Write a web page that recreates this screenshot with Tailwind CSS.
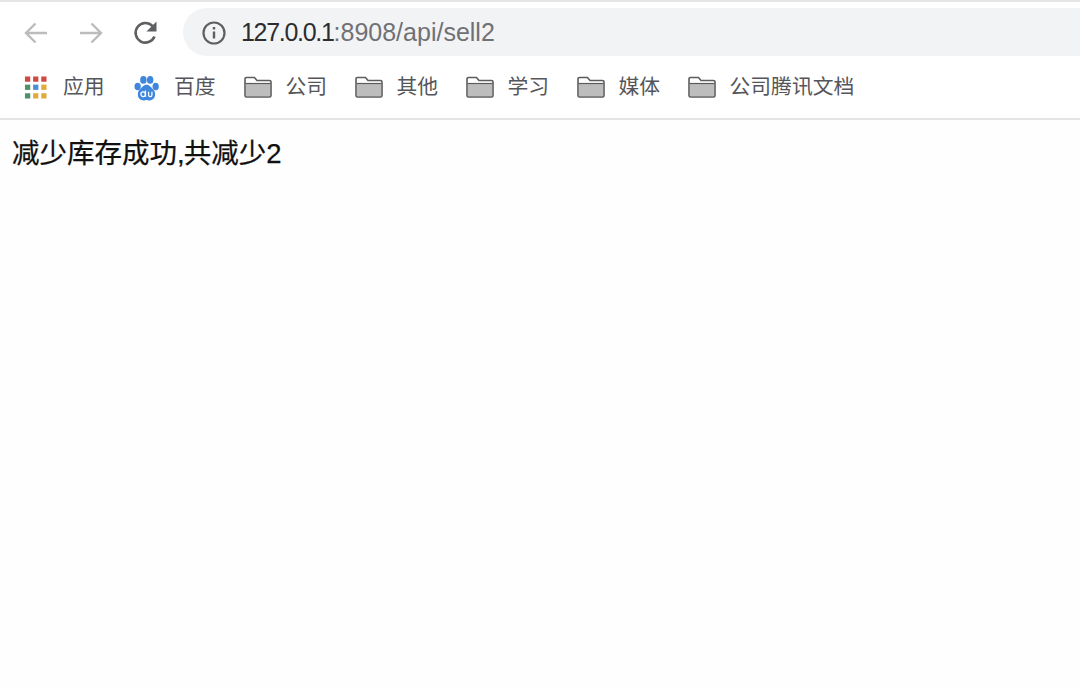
<!DOCTYPE html>
<html lang="zh-CN">
<head>
<meta charset="utf-8">
<script src="https://cdn.jsdelivr.net/npm/@tailwindcss/browser@4"></script>
</head>
<body class="bg-[#fefefe] font-['Liberation_Sans','Noto_Sans_CJK_SC',sans-serif] w-[1080px] h-[687px] overflow-hidden">
<div class="h-[120px] bg-white border-t-[2px] border-b-[2px] border-t-[#e6e6e6] border-b-[#e4e4e4] flex flex-col">
  <div class="h-[60px] pt-[6px] flex items-start">
    <div class="w-[183px] h-[48px] flex items-center pl-[22px] gap-[27px] shrink-0">
      <svg class="w-[28px] h-[28px] mt-[2px]" viewBox="0 0 28 28" fill="none" stroke="#bcbcbc" stroke-width="2.4"><path d="M25 14H4M13.5 4.5L4 14l9.500 9.500"/></svg>
      <svg class="w-[28px] h-[28px] mt-[2px]" viewBox="0 0 28 28" fill="none" stroke="#bcbcbc" stroke-width="2.400"><path d="M3 14h21M14.500 4.500L24 14l-9.500 9.500"/></svg>
      <svg class="w-[28px] h-[28px] mt-[2px]" viewBox="0 0 28 28" fill="none"><path d="M22.500 17.500A9.800 9.800 0 1 1 20.500 7" stroke="#5f6063" stroke-width="2.600"/><path d="M24.500 2.500v10h-10z" fill="#5f6063"/></svg>
    </div>
    <div class="flex-1 h-[48px] bg-[#f2f3f5] rounded-l-[24px] flex items-center pl-[18px]">
      <svg class="w-[26px] h-[26px] shrink-0 mt-[2px]" viewBox="0 0 26 26" fill="none"><circle cx="13" cy="13" r="10.500" stroke="#5f6063" stroke-width="2.200"/><path d="M13 11.500v7M13 7v2.600" stroke="#5f6063" stroke-width="2.400"/></svg>
      <div class="ml-[14px] mt-[2px] text-[25px] text-[#707174] whitespace-nowrap"><span class="text-[#2c2d30] tracking-[-1.300px]">127.0.0.1</span><span>:8908/api/sell2</span></div>
    </div>
  </div>
  <div class="flex-1 flex items-center pl-[24px] pb-[6px] text-[20.800px] text-[#55565a] whitespace-nowrap">
    <div class="flex items-center w-[110px]">
      <svg class="w-[23px] h-[23px] shrink-0" viewBox="0 0 24 24">
        <rect x="1" y="0.500" width="5.500" height="5.500" fill="#cf4a43"/><rect x="9.500" y="0.500" width="5.500" height="5.500" fill="#cf4a43"/><rect x="18" y="0.500" width="5.500" height="5.500" fill="#cf4a43"/>
        <rect x="1" y="9" width="5.500" height="5.500" fill="#4e9365"/><rect x="9.500" y="9" width="5.500" height="5.500" fill="#4b8ed8"/><rect x="18" y="9" width="5.500" height="5.500" fill="#e0aa3c"/>
        <rect x="1" y="18" width="5.500" height="5.500" fill="#4e9365"/><rect x="9.500" y="18" width="5.500" height="5.500" fill="#e0aa3c"/><rect x="18" y="18" width="5.500" height="5.500" fill="#e0aa3c"/>
      </svg>
      <span class="ml-[16px]">应用</span>
    </div>
    <div class="flex items-center w-[110px]">
      <svg class="w-[25px] h-[25px] shrink-0 mt-[2px]" viewBox="0 0 24 24" fill="#3f86dd">
        <ellipse cx="3.500" cy="10" rx="3" ry="3.600"/><ellipse cx="9" cy="3.800" rx="3.100" ry="3.700"/><ellipse cx="15.500" cy="3.800" rx="3.100" ry="3.700"/><ellipse cx="20.800" cy="10" rx="3" ry="3.600"/>
        <path d="M12 8.500c3 0 4 2.500 6.500 4.500 3 2.500 2.500 10.500-3.500 10.500-1.500 0-2-.5-3-.5s-1.500.5-3 .5c-6 0-6.500-8-3.500-10.500 2.500-2 3.500-4.500 6.500-4.500z"/>
        <circle cx="8.800" cy="17.500" r="2.200" fill="none" stroke="#fff" stroke-width="1.200"/>
        <path d="M11 13.800v6.200M14 15.200v3c0 2.200 3.200 2.200 3.200 0v-3" fill="none" stroke="#fff" stroke-width="1.200"/>
      </svg>
      <span class="ml-[15px]">百度</span>
    </div>
    <div class="flex items-center w-[111px]">
      <svg class="w-[28px] h-[22px] shrink-0" viewBox="0 0 28 22"><path d="M1 3a1.500 1.500 0 0 1 1.500-1.500h8L13 4.500h12.500A1.500 1.500 0 0 1 27 6v13.500a1.500 1.500 0 0 1-1.500 1.500h-23A1.500 1.500 0 0 1 1 19.500z" fill="#fff" stroke="#5c5c5e" stroke-width="1.600"/><path d="M2 8h24v12H2z" fill="#bdbdbe"/><path d="M1.500 7.500h25" stroke="#5c5c5e" stroke-width="1.200"/></svg>
      <span class="ml-[13.500px]">公司</span>
    </div>
    <div class="flex items-center w-[111px]">
      <svg class="w-[28px] h-[22px] shrink-0" viewBox="0 0 28 22"><path d="M1 3a1.500 1.500 0 0 1 1.500-1.500h8L13 4.500h12.500A1.500 1.500 0 0 1 27 6v13.500a1.500 1.500 0 0 1-1.500 1.500h-23A1.500 1.500 0 0 1 1 19.500z" fill="#fff" stroke="#5c5c5e" stroke-width="1.600"/><path d="M2 8h24v12H2z" fill="#bdbdbe"/><path d="M1.500 7.500h25" stroke="#5c5c5e" stroke-width="1.200"/></svg>
      <span class="ml-[13.500px]">其他</span>
    </div>
    <div class="flex items-center w-[111px]">
      <svg class="w-[28px] h-[22px] shrink-0" viewBox="0 0 28 22"><path d="M1 3a1.500 1.500 0 0 1 1.500-1.500h8L13 4.500h12.500A1.500 1.500 0 0 1 27 6v13.500a1.500 1.500 0 0 1-1.500 1.500h-23A1.500 1.500 0 0 1 1 19.500z" fill="#fff" stroke="#5c5c5e" stroke-width="1.600"/><path d="M2 8h24v12H2z" fill="#bdbdbe"/><path d="M1.500 7.500h25" stroke="#5c5c5e" stroke-width="1.200"/></svg>
      <span class="ml-[13.500px]">学习</span>
    </div>
    <div class="flex items-center w-[111px]">
      <svg class="w-[28px] h-[22px] shrink-0" viewBox="0 0 28 22"><path d="M1 3a1.500 1.500 0 0 1 1.500-1.500h8L13 4.500h12.500A1.500 1.500 0 0 1 27 6v13.500a1.500 1.500 0 0 1-1.500 1.500h-23A1.500 1.500 0 0 1 1 19.500z" fill="#fff" stroke="#5c5c5e" stroke-width="1.600"/><path d="M2 8h24v12H2z" fill="#bdbdbe"/><path d="M1.500 7.500h25" stroke="#5c5c5e" stroke-width="1.200"/></svg>
      <span class="ml-[13.500px]">媒体</span>
    </div>
    <div class="flex items-center">
      <svg class="w-[28px] h-[22px] shrink-0" viewBox="0 0 28 22"><path d="M1 3a1.500 1.500 0 0 1 1.500-1.500h8L13 4.500h12.500A1.500 1.500 0 0 1 27 6v13.500a1.500 1.500 0 0 1-1.500 1.500h-23A1.500 1.500 0 0 1 1 19.500z" fill="#fff" stroke="#5c5c5e" stroke-width="1.600"/><path d="M2 8h24v12H2z" fill="#bdbdbe"/><path d="M1.500 7.500h25" stroke="#5c5c5e" stroke-width="1.200"/></svg>
      <span class="ml-[13.500px]">公司腾讯文档</span>
    </div>
  </div>
</div>
<p class="pl-[12px] pt-[16px] text-[27.500px] leading-[36px] text-[#111] whitespace-nowrap [-webkit-text-stroke:0.25px_#111]">减少库存成功<span class="tracking-[-1px]">,</span>共减少2</p>
</body>
</html>
